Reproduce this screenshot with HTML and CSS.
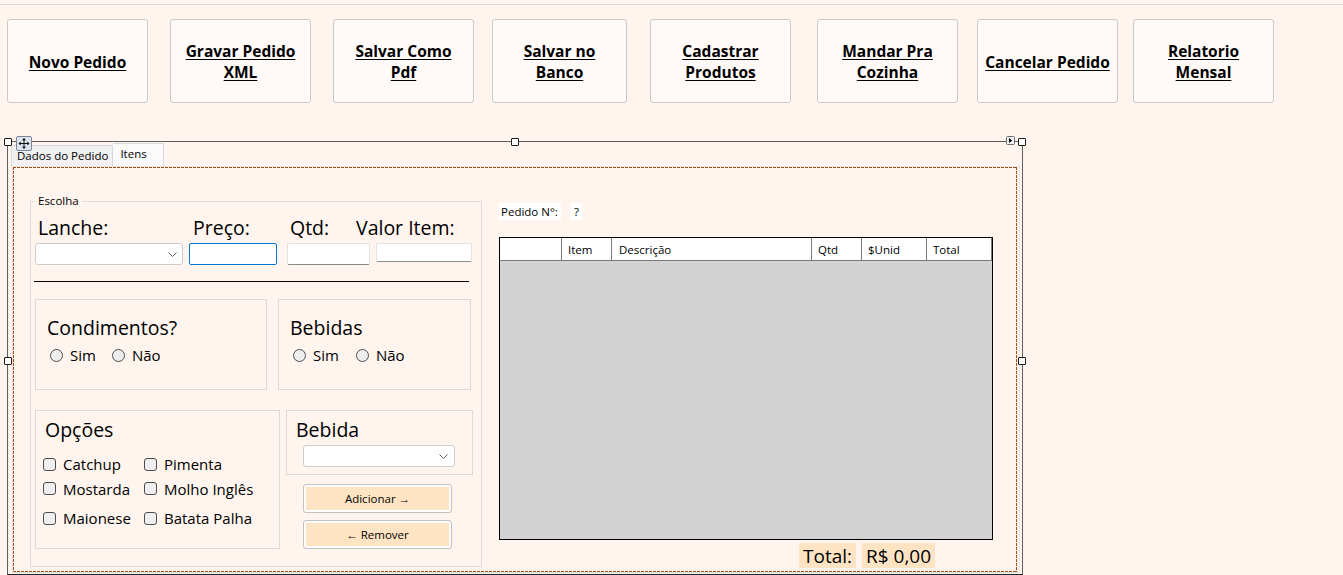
FILE: index.html
```html
<!DOCTYPE html>
<html lang="pt-BR">
<head>
<meta charset="utf-8">
<title>Pedidos</title>
<link rel="stylesheet" href="styles.css">
</head>
<body>
<div class="top-rule"></div>
<nav class="toolbar">
  <button class="tb-btn">Novo Pedido</button>
  <button class="tb-btn">Gravar Pedido<br>XML</button>
  <button class="tb-btn">Salvar Como<br>Pdf</button>
  <button class="tb-btn tb-narrow">Salvar no<br>Banco</button>
  <button class="tb-btn">Cadastrar<br>Produtos</button>
  <button class="tb-btn">Mandar Pra<br>Cozinha</button>
  <button class="tb-btn">Cancelar Pedido</button>
  <button class="tb-btn">Relatorio<br>Mensal</button>
</nav>

<section class="designer">
  <span class="handle h-tl"></span>
  <span class="handle h-tm"></span>
  <span class="handle h-tr"></span>
  <span class="handle h-ml"></span>
  <span class="handle h-mr"></span>
  <span class="move-glyph">
    <svg width="16" height="15" viewBox="0 0 16 15">
      <rect x="0.5" y="0.5" width="15" height="14" rx="1.5" fill="#dfe5ee" stroke="#7a8696"/>
      <path d="M8 3.5v8M4 7.5h8" stroke="#111" stroke-width="1"/>
      <path d="M8 2l-2 2.2h4z M8 13l-2-2.2h4z M2.5 7.5l2.2-2v4z M13.5 7.5l-2.2-2v4z" fill="#111"/>
    </svg>
  </span>
  <span class="smart-tag">
    <svg width="9" height="9" viewBox="0 0 9 9">
      <rect x="0.5" y="0.5" width="8" height="8" rx="1" fill="#f2f2f2" stroke="#6e6e6e"/>
      <path d="M3 2l3.2 2.5L3 7z" fill="#000"/>
    </svg>
  </span>

  <div class="tabstrip">
    <div class="tab">Dados do Pedido</div>
    <div class="tab tab-active">Itens</div>
  </div>

  <div class="tabpage">
    <div class="selection">
      <fieldset class="escolha">
        <legend>Escolha</legend>
        <div class="gb-body">
          <div class="field-grid">
            <span class="lbl lbl-lanche">Lanche:</span>
            <span class="lbl lbl-preco">Preço:</span>
            <span class="lbl lbl-qtd">Qtd:</span>
            <span class="lbl lbl-valor">Valor Item:</span>
            <div class="combo combo-lanche">
              <svg width="9" height="5" viewBox="0 0 9 5"><path d="M0.5 0.5L4.5 4.5L8.5 0.5" fill="none" stroke="#5f5f5f"/></svg>
            </div>
            <div class="textbox tb-preco"></div>
            <div class="textbox tb-qtd"></div>
            <div class="textbox tb-valor"></div>
          </div>

          <div class="separator"></div>

          <div class="panel-row">
            <div class="panel panel-cond">
              <div class="panel-title">Condimentos?</div>
              <div class="radio-row">
                <label class="opt"><input type="radio" class="radio" name="cond"><span>Sim</span></label>
                <label class="opt"><input type="radio" class="radio" name="cond"><span>Não</span></label>
              </div>
            </div>
            <div class="panel panel-beb">
              <div class="panel-title">Bebidas</div>
              <div class="radio-row radio-row-beb">
                <label class="opt"><input type="radio" class="radio" name="beb"><span>Sim</span></label>
                <label class="opt"><input type="radio" class="radio" name="beb"><span>Não</span></label>
              </div>
            </div>
          </div>

          <div class="lower-row">
            <div class="panel panel-opcoes">
              <div class="panel-title opcoes-title">Opções</div>
              <div class="cb-row">
                <label class="opt cb-first"><input type="checkbox" class="check"><span>Catchup</span></label>
                <label class="opt"><input type="checkbox" class="check"><span>Pimenta</span></label>
              </div>
              <div class="cb-row">
                <label class="opt cb-first"><input type="checkbox" class="check"><span>Mostarda</span></label>
                <label class="opt"><input type="checkbox" class="check"><span>Molho Inglês</span></label>
              </div>
              <div class="cb-row cb-row-last">
                <label class="opt cb-first"><input type="checkbox" class="check"><span>Maionese</span></label>
                <label class="opt"><input type="checkbox" class="check"><span>Batata Palha</span></label>
              </div>
            </div>

            <div class="side-col">
              <div class="panel panel-bebida">
                <div class="panel-title">Bebida</div>
                <div class="combo combo-bebida">
                  <svg width="9" height="5" viewBox="0 0 9 5"><path d="M0.5 0.5L4.5 4.5L8.5 0.5" fill="none" stroke="#5f5f5f"/></svg>
                </div>
              </div>
              <button class="action-btn">Adicionar →</button>
              <button class="action-btn">← Remover</button>
            </div>
          </div>
        </div>
      </fieldset>

      <div class="order">
        <div class="pedido-row">
          <span class="tag">Pedido N°:</span>
          <span class="tag tag-q">?</span>
        </div>
        <div class="grid">
          <div class="grid-head">
            <div class="gh gh-row"></div>
            <div class="gh gh-item">Item</div>
            <div class="gh gh-desc">Descrição</div>
            <div class="gh gh-qtd">Qtd</div>
            <div class="gh gh-unid">$Unid</div>
            <div class="gh gh-total">Total</div>
          </div>
        </div>
        <div class="total-row">
          <span class="total-tag">Total:</span>
          <span class="total-tag">R$ 0,00</span>
        </div>
      </div>
    </div>
  </div>
</section>
</body>
</html>
```

FILE: styles.css
```css
* { box-sizing: border-box; }

html, body { margin: 0; }

body {
  width: 1343px;
  height: 575px;
  overflow: hidden;
  background: #fff5ee;
  color: #000;
  font-family: "Open Sans", "Noto Sans", sans-serif;
}

.top-rule {
  height: 5px;
  border-bottom: 1px solid #dcdcdc;
}

/* ---------- toolbar ---------- */
.toolbar {
  display: flex;
  padding: 14px 0 0 7px;
}

.tb-btn {
  flex: none;
  width: 141px;
  height: 84px;
  padding: 2px 0 0;
  border: 1px solid #c9c9c9;
  border-radius: 3px;
  background: #fffaf8;
  color: #000;
  font-family: "Open Sans", "Noto Sans", sans-serif;
  font-size: 15.5px;
  font-weight: 700;
  line-height: 21px;
  text-decoration: underline;
  text-underline-offset: 2px;
}

.tb-narrow { width: 135px; }

.tb-btn:nth-child(2) { margin-left: 22px; }
.tb-btn:nth-child(3) { margin-left: 22px; }
.tb-btn:nth-child(4) { margin-left: 18px; }
.tb-btn:nth-child(5) { margin-left: 23px; }
.tb-btn:nth-child(6) { margin-left: 26px; }
.tb-btn:nth-child(7) { margin-left: 19px; }
.tb-btn:nth-child(8) { margin-left: 15px; }

/* ---------- designer surface ---------- */
.designer {
  position: relative;
  width: 1016px;
  height: 434px;
  margin: 38px 0 0 7px;
  border: 1px solid #5e5e5e;
  border-bottom-color: #222;
}

.handle {
  position: absolute;
  width: 8px;
  height: 8px;
  border: 1px solid #1c1c1c;
  border-radius: 1px;
  background: #fff;
  z-index: 3;
}
.h-tl { left: -4px; top: -4px; }
.h-tm { left: 503px; top: -4px; }
.h-tr { left: 1010px; top: -4px; }
.h-ml { left: -4px; top: 215px; }
.h-mr { left: 1010px; top: 215px; }

.move-glyph {
  position: absolute;
  left: 8px;
  top: -6px;
  width: 16px;
  height: 15px;
  z-index: 3;
}
.move-glyph svg, .smart-tag svg { display: block; }

.smart-tag {
  position: absolute;
  left: 998px;
  top: -6px;
  width: 9px;
  height: 9px;
  z-index: 3;
}

.tabstrip {
  display: flex;
  align-items: flex-end;
  height: 24px;
  padding-left: 3px;
}

.tab {
  height: 21px;
  padding: 0 4px 0 5px;
  border: 1px solid #d9d9d9;
  border-bottom: 0;
  background: #f0f0f0;
  font-size: 11.5px;
  line-height: 19px;
  white-space: nowrap;
}

.tab-active {
  width: 51px;
  height: 23px;
  padding: 0 0 0 7px;
  background: #fafafa;
  border-left: 0;
}

.tabpage {
  height: 407px;
  margin: 0 2px 0 4px;
  padding: 0 2px 0 0;
  border: 1px solid #e4e4e4;
}

.selection {
  display: flex;
  align-items: flex-start;
  height: 100%;
  padding: 26px 1px 1px 17px;
  background:
    repeating-linear-gradient(90deg, #a84c12 0 3px, transparent 3px 4px) left top / 100% 1px no-repeat,
    repeating-linear-gradient(90deg, #a84c12 0 3px, transparent 3px 4px) left bottom / 100% 1px no-repeat,
    repeating-linear-gradient(180deg, #a84c12 0 3px, transparent 3px 4px) left top / 1px 100% no-repeat,
    repeating-linear-gradient(180deg, #a84c12 0 3px, transparent 3px 4px) right top / 1px 100% no-repeat;
}

/* ---------- Escolha group ---------- */
.escolha {
  flex: none;
  width: 452px;
  height: 374px;
  margin: 0;
  padding: 0;
  min-width: 0;
  border: 1px solid #dcdcdc;
}

.escolha legend {
  margin-left: 4px;
  padding: 0 3px;
  font-size: 11.5px;
  line-height: 16px;
}

.gb-body {
  padding: 6px 0 0 4px;
}

.field-grid {
  display: grid;
  grid-template-columns: 154px 98px 89px 96px;
}

.lbl {
  font-size: 19.5px;
  line-height: 26px;
  white-space: nowrap;
}
.lbl-lanche { margin-left: 3px; }
.lbl-preco  { margin-left: 4px; }
.lbl-qtd    { margin-left: 3px; }
.lbl-valor  { margin-left: -20px; }

.combo {
  display: flex;
  align-items: center;
  justify-content: flex-end;
  height: 22px;
  margin-top: 2px;
  padding-right: 5px;
  border: 1px solid #cdcdcd;
  border-radius: 3px;
  background: #fff;
}
.combo svg { display: block; }

.combo-lanche { width: 148px; }

.textbox {
  height: 22px;
  margin-top: 2px;
  border: 1px solid #e2e2e2;
  border-bottom-color: #8a8a8a;
  border-radius: 2px;
  background: #fff;
}

.tb-preco {
  width: 88px;
  border-color: #0078d7;
  border-bottom-color: #0078d7;
}
.tb-qtd   { width: 83px; }
.tb-valor { width: 96px; height: 19px; }

.separator {
  width: 435px;
  height: 1px;
  margin: 16px 0 0 -1px;
  background: #000;
}

/* ---------- panels ---------- */
.panel {
  border: 1px solid #dadada;
}

.panel-title {
  font-size: 19.5px;
  line-height: 26px;
  white-space: nowrap;
}

.panel-row {
  display: flex;
  gap: 11px;
  margin-top: 17px;
}

.panel-cond,
.panel-beb {
  height: 91px;
  padding: 15px 0 0 11px;
}
.panel-cond { width: 232px; }
.panel-beb  { width: 193px; }

.radio-row {
  display: flex;
  gap: 16px;
  height: 20px;
  margin-top: 4px;
  padding-left: 3px;
}
.radio-row-beb { gap: 17px; }

.opt {
  display: flex;
  align-items: center;
  gap: 7px;
  height: 20px;
  font-size: 15px;
  line-height: 20px;
  white-space: nowrap;
}

.radio,
.check {
  appearance: none;
  -webkit-appearance: none;
  flex: none;
  width: 13px;
  height: 13px;
  margin: 0;
  border: 1px solid #4d4d4d;
  background: #eeeeee;
}
.radio { border-radius: 50%; }
.check { border-radius: 3px; }

.lower-row {
  display: flex;
  align-items: flex-start;
  gap: 6px;
  margin-top: 20px;
}

.panel-opcoes {
  width: 245px;
  height: 139px;
  padding: 6px 0 0 7px;
}

.opcoes-title { margin-left: 2px; }

.cb-row {
  display: flex;
  margin-top: 4.5px;
}
.opcoes-title + .cb-row { margin-top: 11px; }
.cb-row-last { margin-top: 9.5px; }

.cb-first { width: 101px; }

.side-col {
  display: flex;
  flex-direction: column;
  width: 187px;
}

.panel-bebida {
  height: 65px;
  padding: 6px 0 0 9px;
}

.combo-bebida {
  width: 152px;
  margin: 2px 0 0 7px;
  padding-right: 6px;
}

.action-btn {
  width: 149px;
  height: 29px;
  margin: 9px 0 0 17px;
  padding: 0;
  border: 1px solid #c2c2c2;
  border-radius: 3px;
  background: #ffe4c4;
  box-shadow: inset 0 0 0 2px #fdfdfd;
  color: #000;
  font-family: "Open Sans", "Noto Sans", sans-serif;
  font-size: 11.5px;
  line-height: 16px;
}
.action-btn + .action-btn { margin-top: 7px; }

/* ---------- order column ---------- */
.order {
  width: 494px;
  margin-left: 17px;
}

.pedido-row {
  display: flex;
  gap: 10px;
  margin-top: 10px;
}

.tag {
  height: 17px;
  padding: 0 3px 0 2px;
  background: #fff;
  font-size: 11.5px;
  line-height: 17px;
}
.tag-q { padding: 0 3px; }

.grid {
  height: 303px;
  margin-top: 17px;
  border: 1px solid #000;
  background: #d3d3d3;
}

.grid-head {
  display: flex;
  height: 23px;
  background: #fff;
  border-bottom: 1px solid #7a7a7a;
}

.gh {
  flex: none;
  height: 22px;
  padding-left: 6px;
  border-right: 1px solid #7a7a7a;
  font-size: 11.5px;
  line-height: 24px;
  white-space: nowrap;
  overflow: hidden;
}
.gh-row   { width: 62px; }
.gh-item  { width: 50px; }
.gh-desc  { width: 200px; padding-left: 7px; }
.gh-qtd   { width: 50px; }
.gh-unid  { width: 65px; }
.gh-total { width: 65px; }

.total-row {
  display: flex;
  gap: 6px;
  margin-top: 3px;
  padding-left: 300px;
}

.total-tag {
  height: 25px;
  padding: 0 4px;
  background: #ffe4c4;
  font-size: 19px;
  line-height: 26px;
  white-space: nowrap;
}
```
